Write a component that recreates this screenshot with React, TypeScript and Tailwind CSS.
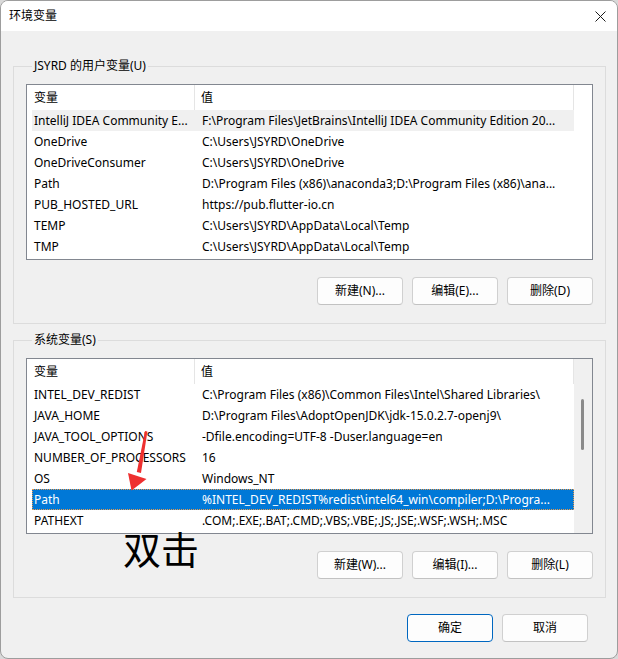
import React from 'react';

type Row = { name: string; value: string };

const USER_VARS: Row[] = [
  { name: 'IntelliJ IDEA Community E...', value: 'F:\\Program Files\\JetBrains\\IntelliJ IDEA Community Edition 20...' },
  { name: 'OneDrive', value: 'C:\\Users\\JSYRD\\OneDrive' },
  { name: 'OneDriveConsumer', value: 'C:\\Users\\JSYRD\\OneDrive' },
  { name: 'Path', value: 'D:\\Program Files (x86)\\anaconda3;D:\\Program Files (x86)\\ana...' },
  { name: 'PUB_HOSTED_URL', value: 'https://pub.flutter-io.cn' },
  { name: 'TEMP', value: 'C:\\Users\\JSYRD\\AppData\\Local\\Temp' },
  { name: 'TMP', value: 'C:\\Users\\JSYRD\\AppData\\Local\\Temp' },
];

const SYSTEM_VARS: Row[] = [
  { name: 'INTEL_DEV_REDIST', value: 'C:\\Program Files (x86)\\Common Files\\Intel\\Shared Libraries\\' },
  { name: 'JAVA_HOME', value: 'D:\\Program Files\\AdoptOpenJDK\\jdk-15.0.2.7-openj9\\' },
  { name: 'JAVA_TOOL_OPTIONS', value: '-Dfile.encoding=UTF-8 -Duser.language=en' },
  { name: 'NUMBER_OF_PROCESSORS', value: '16' },
  { name: 'OS', value: 'Windows_NT' },
  { name: 'Path', value: '%INTEL_DEV_REDIST%redist\\intel64_win\\compiler;D:\\Progra...' },
  { name: 'PATHEXT', value: '.COM;.EXE;.BAT;.CMD;.VBS;.VBE;.JS;.JSE;.WSF;.WSH;.MSC' },
];

const WinButton: React.FC<{ label: string; primary?: boolean }> = ({ label, primary }) => (
  <button
    className={
      primary
        ? 'w-[86px] h-[28px] rounded-[4px] border border-[#0067c0] bg-[#fdfdfd] text-[12px] text-black'
        : 'w-[86px] h-[28px] rounded-[4px] border border-[#d0d0d0] border-b-[#c2c2c2] bg-[#fdfdfd] text-[12px] text-black'
    }
  >
    {label}
  </button>
);

const VarList: React.FC<{ rows: Row[]; selected: number; active?: boolean; scrollbar?: boolean }> = ({
  rows,
  selected,
  active,
  scrollbar,
}) => (
  <div className="w-[567px] h-[176px] border border-[#828790] bg-white flex">
    <div className="w-[547px] flex flex-col">
      <div className="h-[25px] flex items-center shrink-0">
        <div className="w-[168px] h-full pl-[7px] flex items-center border-r border-[#e5e5e5]">变量</div>
        <div className="flex-1 h-full pl-[6px] flex items-center border-r border-[#e5e5e5]">值</div>
      </div>
      <div className="pl-[5px]">
        {rows.map((r, i) => {
          const isSel = i === selected;
          const rowCls = isSel
            ? active
              ? 'h-[21px] flex items-center bg-[#0078d7] text-white outline-1 outline-dotted outline-[#e89a4c] -outline-offset-1'
              : 'h-[21px] flex items-center bg-[#f0f0f0]'
            : 'h-[21px] flex items-center';
          return (
            <div key={r.name} className={rowCls}>
              <div className="w-[163px] pl-[2px] whitespace-nowrap overflow-hidden">{r.name}</div>
              <div className="flex-1 pl-[7px] whitespace-nowrap overflow-hidden">{r.value}</div>
            </div>
          );
        })}
      </div>
    </div>
    {scrollbar ? (
      <div className="flex-1 bg-[#f0f0f0] relative">
        <div className="absolute left-[7px] top-[40px] w-[3px] h-[51px] rounded-full bg-[#8a8a8a]" />
      </div>
    ) : (
      <div className="flex-1" />
    )}
  </div>
);

const Group: React.FC<{ title: string; children: React.ReactNode; className?: string }> = ({ title, children, className }) => (
  <fieldset className={'border border-[#dcdcdc] px-[12px] pt-[10px] pb-[18px] ' + (className ?? '')}>
    <legend className="ml-[6px] px-[2px] leading-[16px] text-[12px]">{title}</legend>
    {children}
  </fieldset>
);

export default function App() {
  return (
    <div className="w-[618px] h-[659px] bg-[#d9d9d9] font-['Noto_Sans','Noto_Sans_CJK_SC',sans-serif] text-[12px] text-black">
      <div className="w-full h-full rounded-[8px] border border-[#9d9d9d] bg-[#f0f0f0] overflow-hidden flex flex-col relative">
        <div className="h-[30px] bg-white flex items-center justify-between pl-[8px] pr-[9px] shrink-0">
          <span className="text-[12px]">环境变量</span>
          <svg width="11" height="11" viewBox="0 0 11 11" className="mr-[2px]">
            <path d="M0.5 0.5 L10.5 10.5 M10.5 0.5 L0.5 10.5" stroke="#1a1a1a" strokeWidth="1" />
          </svg>
        </div>

        <div className="pl-[12px] pr-[11px] pt-[27px] flex flex-col">
          <Group title="JSYRD 的用户变量(U)">
            <VarList rows={USER_VARS} selected={0} />
            <div className="mt-[17px] flex justify-end gap-[9px]">
              <WinButton label="新建(N)..." />
              <WinButton label="编辑(E)..." />
              <WinButton label="删除(D)" />
            </div>
          </Group>

          <Group title="系统变量(S)" className="mt-[8px]">
            <VarList rows={SYSTEM_VARS} selected={5} active scrollbar />
            <div className="mt-[17px] flex justify-end gap-[9px]">
              <WinButton label="新建(W)..." />
              <WinButton label="编辑(I)..." />
              <WinButton label="删除(L)" />
            </div>
          </Group>

          <div className="mt-[16px] pr-[18px] flex justify-end gap-[9px]">
            <WinButton label="确定" primary />
            <WinButton label="取消" />
          </div>
        </div>

        <span className="absolute left-[122px] top-[528px] text-[38px] leading-none font-['Noto_Sans_CJK_SC',sans-serif]">双击</span>
        <svg className="absolute left-0 top-0 pointer-events-none" width="618" height="659">
          <polygon points="144,430 146.4,430.6 140,472 135.8,471" fill="#ee3030" />
          <polygon points="127,472 145.5,478 130.5,489.5" fill="#ee3030" />
        </svg>
      </div>
    </div>
  );
}
